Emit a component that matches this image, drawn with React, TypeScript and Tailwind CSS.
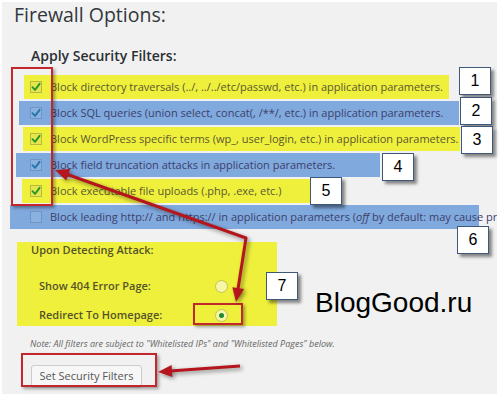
const YELLOW = 'bg-[#eff03c]'
const BLUE = 'bg-[#80a9dd]'

type Tone = 'yellow' | 'blue'

const FILTERS: Array<{ label: React.ReactNode; tone: Tone; checked: boolean; cls: string }> = [
  {
    label: 'Block directory traversals (../, ../../etc/passwd, etc.) in application parameters.',
    tone: 'yellow',
    checked: true,
    cls: 'ml-[22px] w-[425px] pl-[6px]',
  },
  {
    label: 'Block SQL queries (union select, concat(, /**/, etc.) in application parameters.',
    tone: 'blue',
    checked: true,
    cls: 'ml-[17px] w-[440px] pl-[11px]',
  },
  {
    label: 'Block WordPress specific terms (wp_, user_login, etc.) in application parameters.',
    tone: 'yellow',
    checked: true,
    cls: 'ml-[21px] w-[437px] pl-[7px]',
  },
  {
    label: 'Block field truncation attacks in application parameters.',
    tone: 'blue',
    checked: true,
    cls: 'ml-[14px] w-[364px] pl-[14px]',
  },
  {
    label: 'Block executable file uploads (.php, .exe, etc.)',
    tone: 'yellow',
    checked: true,
    cls: 'ml-[20px] w-[288px] pl-[8px]',
  },
  {
    label: (
      <>
        Block leading http:// and https:// in application parameters (<em>off</em> by default: may cause problems with some plugins).
      </>
    ),
    tone: 'blue',
    checked: false,
    cls: 'ml-[8px] w-[469px] pl-[20px]',
  },
]

// numbered callouts: left, top
const CALLOUTS = [
  { n: '1', cls: 'left-[459px] top-[67px]' },
  { n: '2', cls: 'left-[460px] top-[97px]' },
  { n: '3', cls: 'left-[461px] top-[126px]' },
  { n: '4', cls: 'left-[382px] top-[153px]' },
  { n: '5', cls: 'left-[310px] top-[177px]' },
  { n: '6', cls: 'left-[457px] top-[226px]' },
  { n: '7', cls: 'left-[266px] top-[272px]' },
]

function Checkbox({ tone, checked }: { tone: Tone; checked: boolean }) {
  const yellow = tone === 'yellow'
  return (
    <span
      className={
        'flex items-center justify-center w-[12px] h-[12px] shrink-0 border ' +
        (yellow ? 'bg-[#e6e64a] border-[#b8b845]' : 'bg-[#8ab1df] border-[#6f95c6]')
      }
    >
      {checked && (
        <svg width="10" height="10" viewBox="0 0 10 10">
          <path
            d="M1.5 5.2 L4 7.8 L8.6 1.8"
            fill="none"
            stroke={yellow ? '#25962a' : '#2377a8'}
            strokeWidth="1.9"
            strokeLinecap="round"
            strokeLinejoin="round"
          />
        </svg>
      )}
    </span>
  )
}

function Radio({ checked }: { checked?: boolean }) {
  return (
    <span className="flex items-center justify-center w-[13px] h-[13px] rounded-full border border-[#c4c44e] bg-[#f6f6a8]">
      {checked && <span className="w-[5px] h-[5px] rounded-full bg-[#1f8a33]" />}
    </span>
  )
}

function Arrows() {
  return (
    <svg
      className="absolute inset-0 pointer-events-none drop-shadow-[2px_2px_2px_rgba(0,0,0,0.45)]"
      width="500"
      height="400"
      viewBox="0 0 500 400"
    >
      <g stroke="#b5161d" strokeWidth="3" fill="none" strokeLinejoin="round">
        <polyline points="66,174 246,238 238,289" />
        <line x1="240" y1="366" x2="170" y2="371" />
      </g>
      <g fill="#b5161d">
        <polygon points="55,170 70.2,169 66.2,180.4" />
        <polygon points="236,302 244.1,289.1 232.3,287.3" />
        <polygon points="158,372 172.4,377.1 171.6,365.1" />
      </g>
    </svg>
  )
}

export default function App() {
  return (
    <div className="relative w-[500px] h-[400px] bg-white overflow-hidden font-['Open_Sans',sans-serif]">
      <div className="ml-[2px] mt-[2px] w-[495px] h-[392px] bg-[#f1f1f1] overflow-hidden flex flex-col">
        <h1 className="ml-[12px] text-[19.5px] leading-[26px] font-normal text-[#32373c]">Firewall Options:</h1>

        <h3 className="ml-[29px] mt-[18px] text-[14px] leading-[20px] font-semibold text-[#2b2f33]">
          Apply Security Filters:
        </h3>

        {/* filter checkboxes */}
        <div className="mt-[9px] flex flex-col gap-[2px]">
          {FILTERS.map((f, i) => (
            <div
              key={i}
              className={
                'flex items-center gap-[8px] h-[24px] ' +
                f.cls +
                ' ' +
                (f.tone === 'yellow' ? YELLOW + ' text-[#5a5830]' : BLUE + ' text-[#3c406c]')
              }
            >
              <Checkbox tone={f.tone} checked={f.checked} />
              <span className="text-[11px] leading-[16px] whitespace-nowrap">{f.label}</span>
            </div>
          ))}
        </div>

        {/* attack response */}
        <div className={'mt-[13px] ml-[15px] w-[260px] h-[84px] flex flex-col ' + YELLOW}>
          <div className="pl-[14px] text-[11px] leading-[16px] font-semibold text-[#55532c]">Upon Detecting Attack:</div>
          <div className="mt-[18px] grid grid-cols-[176px_auto] items-center gap-y-[9px] pl-[22px] text-[11px] font-semibold text-[#55532c]">
            <span className="leading-[20px]">Show 404 Error Page:</span>
            <Radio />
            <span className="leading-[20px]">Redirect To Homepage:</span>
            <Radio checked />
          </div>
        </div>

        <p className="ml-[28px] mt-[11px] text-[9px] leading-[14px] italic text-[#666]">
          Note: All filters are subject to "Whitelisted IPs" and "Whitelisted Pages" below.
        </p>

        <div className="ml-[29px] mt-[11px]">
          <button className="w-[111px] h-[22px] rounded-[3px] border border-[#cccccc] bg-[#f7f7f7] shadow-[0_1px_0_#cccccc] text-[11px] text-[#555] leading-[20px]">
            Set Security Filters
          </button>
        </div>
      </div>

      {/* annotation overlay */}
      <div className="absolute left-[11px] top-[67px] w-[42px] h-[139px] border-2 border-[#c1272d] shadow-[2px_2px_3px_rgba(0,0,0,0.35)]" />
      <div className="absolute left-[193px] top-[303px] w-[50px] h-[22px] border-2 border-[#c1272d] shadow-[2px_2px_3px_rgba(0,0,0,0.35)]" />
      <div className="absolute left-[21px] top-[353px] w-[136px] h-[34px] border-2 border-[#c1272d] shadow-[2px_2px_3px_rgba(0,0,0,0.35)]" />

      <Arrows />

      {CALLOUTS.map((c) => (
        <div
          key={c.n}
          className={
            'absolute w-[32px] h-[28px] flex items-center justify-center bg-white border border-[#3f5878] shadow-[3px_3px_3px_rgba(0,0,0,0.45)] font-["Liberation_Sans",Arial,sans-serif] text-[16px] text-black ' +
            c.cls
          }
        >
          {c.n}
        </div>
      ))}

      <div className="absolute left-[315px] top-[289px] font-['Liberation_Sans',Arial,sans-serif] text-[28px] leading-[28px] text-black">
        BlogGood.ru
      </div>
    </div>
  )
}
